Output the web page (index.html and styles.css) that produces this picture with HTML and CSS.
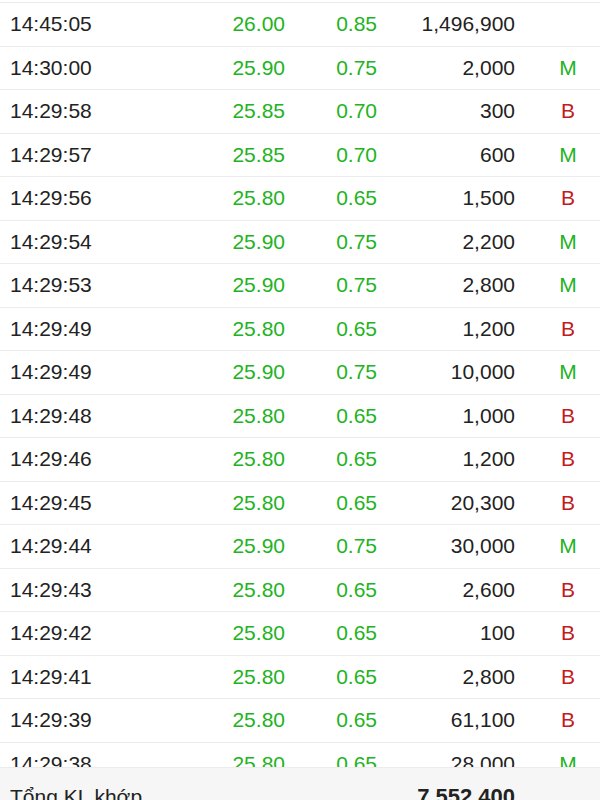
FILE: index.html
```html
<!DOCTYPE html>
<html lang="vi">
<head>
<meta charset="utf-8">
<title>Khớp lệnh</title>
<link rel="stylesheet" href="styles.css">
</head>
<body>
<div class="list">
  <div class="row"><span class="time">14:45:05</span><span class="num up">26.00</span><span class="num up">0.85</span><span class="num vol">1,496,900</span><span class="side"></span></div>
  <div class="row"><span class="time">14:30:00</span><span class="num up">25.90</span><span class="num up">0.75</span><span class="num vol">2,000</span><span class="side m">M</span></div>
  <div class="row"><span class="time">14:29:58</span><span class="num up">25.85</span><span class="num up">0.70</span><span class="num vol">300</span><span class="side b">B</span></div>
  <div class="row"><span class="time">14:29:57</span><span class="num up">25.85</span><span class="num up">0.70</span><span class="num vol">600</span><span class="side m">M</span></div>
  <div class="row"><span class="time">14:29:56</span><span class="num up">25.80</span><span class="num up">0.65</span><span class="num vol">1,500</span><span class="side b">B</span></div>
  <div class="row"><span class="time">14:29:54</span><span class="num up">25.90</span><span class="num up">0.75</span><span class="num vol">2,200</span><span class="side m">M</span></div>
  <div class="row"><span class="time">14:29:53</span><span class="num up">25.90</span><span class="num up">0.75</span><span class="num vol">2,800</span><span class="side m">M</span></div>
  <div class="row"><span class="time">14:29:49</span><span class="num up">25.80</span><span class="num up">0.65</span><span class="num vol">1,200</span><span class="side b">B</span></div>
  <div class="row"><span class="time">14:29:49</span><span class="num up">25.90</span><span class="num up">0.75</span><span class="num vol">10,000</span><span class="side m">M</span></div>
  <div class="row"><span class="time">14:29:48</span><span class="num up">25.80</span><span class="num up">0.65</span><span class="num vol">1,000</span><span class="side b">B</span></div>
  <div class="row"><span class="time">14:29:46</span><span class="num up">25.80</span><span class="num up">0.65</span><span class="num vol">1,200</span><span class="side b">B</span></div>
  <div class="row"><span class="time">14:29:45</span><span class="num up">25.80</span><span class="num up">0.65</span><span class="num vol">20,300</span><span class="side b">B</span></div>
  <div class="row"><span class="time">14:29:44</span><span class="num up">25.90</span><span class="num up">0.75</span><span class="num vol">30,000</span><span class="side m">M</span></div>
  <div class="row"><span class="time">14:29:43</span><span class="num up">25.80</span><span class="num up">0.65</span><span class="num vol">2,600</span><span class="side b">B</span></div>
  <div class="row"><span class="time">14:29:42</span><span class="num up">25.80</span><span class="num up">0.65</span><span class="num vol">100</span><span class="side b">B</span></div>
  <div class="row"><span class="time">14:29:41</span><span class="num up">25.80</span><span class="num up">0.65</span><span class="num vol">2,800</span><span class="side b">B</span></div>
  <div class="row"><span class="time">14:29:39</span><span class="num up">25.80</span><span class="num up">0.65</span><span class="num vol">61,100</span><span class="side b">B</span></div>
  <div class="row"><span class="time">14:29:38</span><span class="num up">25.80</span><span class="num up">0.65</span><span class="num vol">28,000</span><span class="side m">M</span></div>
</div>
<div class="footer">
  <span class="total-label">Tổng KL khớp</span>
  <span class="total-value">7,552,400</span>
</div>
</body>
</html>
```
FILE: styles.css
```css
html, body {
  margin: 0;
  padding: 0;
  background: #ffffff;
  overflow: hidden;
}
body {
  font-family: "Liberation Sans", Arial, sans-serif;
  font-size: 21px;
  color: #222222;
  width: 600px;
  height: 800px;
}
.list {
  padding-top: 2px;
}
.row {
  box-sizing: border-box;
  height: 43.5px;
  border-top: 1px solid #ececec;
  display: grid;
  grid-template-columns: 190px 85px 92px 138px 85px;
  padding-left: 10px;
  align-items: center;
  line-height: 24px;
}
.num {
  text-align: right;
}
.up {
  color: #22b322;
}
.vol {
  color: #222222;
}
.side {
  padding-left: 21px;
  text-align: center;
}
.side.m {
  color: #22b322;
}
.side.b {
  color: #c41a20;
}
.footer {
  position: fixed;
  left: 0;
  right: 0;
  top: 767px;
  height: 60px;
  background: #f6f6f6;
  border-top: 1px solid #ececec;
  display: flex;
  justify-content: space-between;
  align-items: flex-start;
  padding: 17px 85px 0 10px;
  box-sizing: border-box;
  line-height: 24px;
}
.total-label {
  font-size: 21px;
  color: #222222;
}
.total-value {
  font-weight: bold;
  font-size: 22px;
  color: #222222;
}
```
